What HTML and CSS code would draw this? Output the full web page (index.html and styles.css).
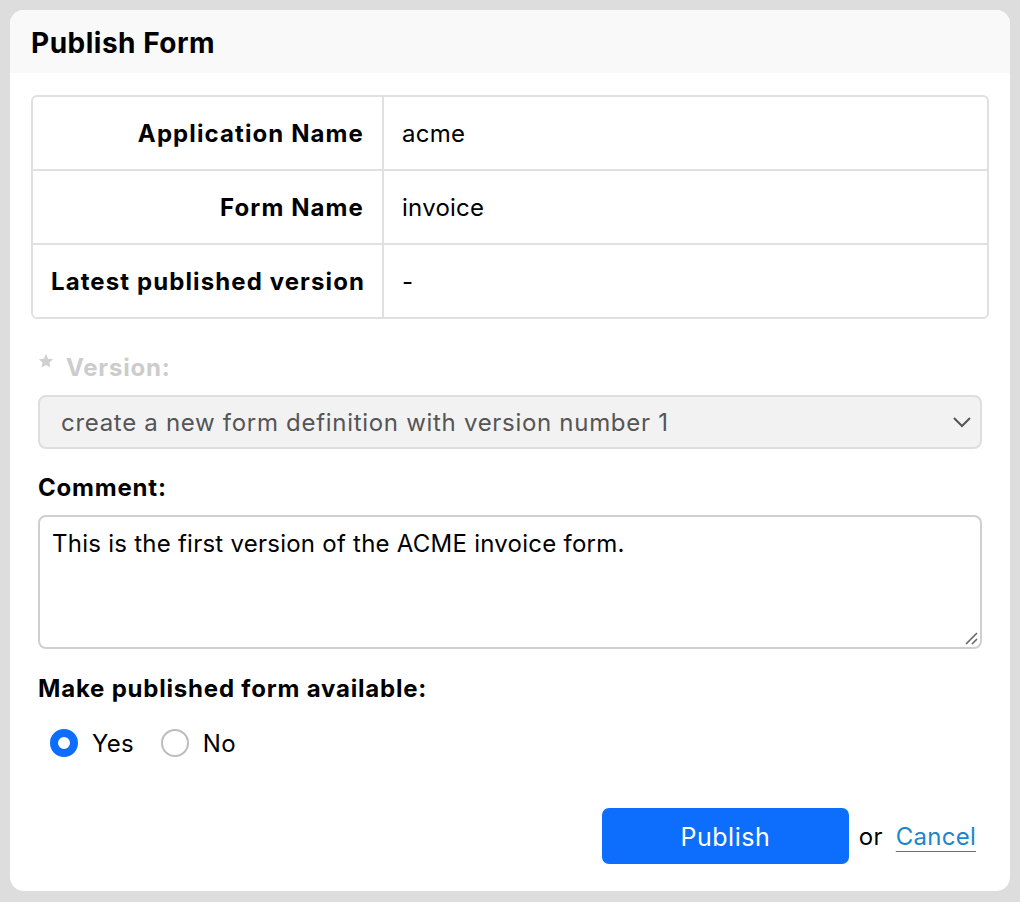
FILE: index.html
```html
<!DOCTYPE html>
<html>
<head>
<meta charset="utf-8">
<link rel="stylesheet" href="styles.css">
</head>
<body>
<div class="card">
  <div class="card-header"><h1>Publish Form</h1></div>
  <div class="card-body">
    <table class="info">
      <tr><th>Application Name</th><td>acme</td></tr>
      <tr><th>Form Name</th><td>invoice</td></tr>
      <tr><th>Latest published version</th><td>-</td></tr>
    </table>
    <div class="form">
      <div class="label disabled">
        <svg class="star" width="16" height="16" viewBox="0 0 24 24"><path d="M12 1.5l3.2 7 7.6.8-5.7 5.1 1.6 7.5L12 18l-6.7 3.9 1.6-7.5L1.2 9.3l7.6-.8z" fill="#d0d0d0"/></svg>
        <span>Version:</span>
      </div>
      <div class="select">
        <span>create a new form definition with version number 1</span>
        <svg width="20" height="12" viewBox="0 0 20 12"><path d="M2 2l8 8 8-8" fill="none" stroke="#555" stroke-width="2"/></svg>
      </div>
      <div class="label comment-label">Comment:</div>
      <div class="textarea">This is the first version of the ACME invoice form.
        <svg class="grip" width="14" height="14" viewBox="0 0 14 14"><path d="M2 13L13 2M8 13l5-5" stroke="#666" stroke-width="1.6" fill="none"/></svg>
      </div>
      <div class="label avail">Make published form available:</div>
      <div class="radios">
        <label class="radio"><span class="dot checked"></span>Yes</label>
        <label class="radio"><span class="dot"></span>No</label>
      </div>
      <div class="actions">
        <button class="btn">Publish</button>
        <span class="or">or</span>
        <a class="cancel" href="#">Cancel</a>
      </div>
    </div>
  </div>
</div>
</body>
</html>
```

FILE: styles.css
```css
html, body {
  margin: 0;
  padding: 0;
  background: #dddddd;
}
body {
  padding: 10px;
  font-family: Inter, "Liberation Sans", sans-serif;
  color: #000;
  font-size: 24px;
  letter-spacing: 0.25px;
}
.card {
  width: 1000px;
  height: 881px;
  background: #fff;
  border-radius: 14px;
  overflow: hidden;
  box-sizing: border-box;
}
.card-header {
  background: #f9f9f9;
  height: 63px;
  display: flex;
  align-items: center;
  padding-left: 21px;
}
.card-header h1 {
  margin: 2px 0 0 0;
  font-size: 28px;
  font-weight: 700;
  letter-spacing: 0.5px;
}
.card-body {
  padding: 22px 21px 0 21px;
}
.info {
  width: 958px;
  table-layout: fixed;
  border-collapse: separate;
  border-spacing: 0;
  border: 2px solid #e0e0e0;
  border-radius: 6px;
}
.info th, .info td {
  height: 74px;
  padding: 0 18px;
  box-sizing: border-box;
  border-top: 2px solid #e0e0e0;
  white-space: nowrap;
}
.info tr:first-child th, .info tr:first-child td { border-top: none; height: 72px; }
.info th {
  width: 351px;
  text-align: right;
  font-weight: 700;
  letter-spacing: 1.1px;
  border-right: 2px solid #e0e0e0;
}
.info td { font-weight: 400; }
.form {
  padding: 0 7px;
}
.label {
  font-weight: 700;
  height: 28px;
  display: flex;
  align-items: center;
  letter-spacing: 0.8px;
}
.label.disabled { color: #cccccc; margin-top: 34px; }
.star { margin-right: 12px; margin-top: -12px; }
.select {
  margin-top: 14px;
  height: 54px;
  box-sizing: border-box;
  border: 2px solid #dedede;
  border-radius: 8px;
  background: #f2f2f2;
  display: flex;
  align-items: center;
  justify-content: space-between;
  padding: 0 8px 0 21px;
  color: #555;
  letter-spacing: 0.7px;
}
.comment-label { margin-top: 24px; }
.textarea {
  position: relative;
  margin-top: 14px;
  height: 134px;
  box-sizing: border-box;
  border: 2px solid #cfcfcf;
  border-radius: 8px;
  padding: 12px 12px;
  line-height: 30px;
}
.grip { position: absolute; right: 2px; bottom: 2px; }
.label.avail { margin-top: 25px; }
.radios {
  display: flex;
  align-items: center;
  margin-top: 27px;
  padding-left: 12px;
  gap: 27px;
  height: 28px;
}
.radio { display: flex; align-items: center; }
.dot {
  width: 28px;
  height: 28px;
  box-sizing: border-box;
  border-radius: 50%;
  border: 2px solid #bdbdbd;
  margin-right: 14px;
}
.dot.checked {
  border: 8px solid #0d6efd;
  background: #fff;
}
.actions {
  display: flex;
  justify-content: flex-end;
  align-items: center;
  margin-top: 51px;
  padding-right: 6px;
}
.btn {
  width: 247px;
  height: 56px;
  background: #0d6efd;
  color: #fff;
  border: none;
  border-radius: 7px;
  font-family: inherit;
  font-size: 25px;
  letter-spacing: 0.5px;
  padding-top: 2px;
}
.or { margin-left: 10px; margin-right: 13px; }
.cancel {
  color: #1a87cc;
  text-decoration: underline;
  text-underline-offset: 6px;
  text-decoration-thickness: 1px;
}
```
